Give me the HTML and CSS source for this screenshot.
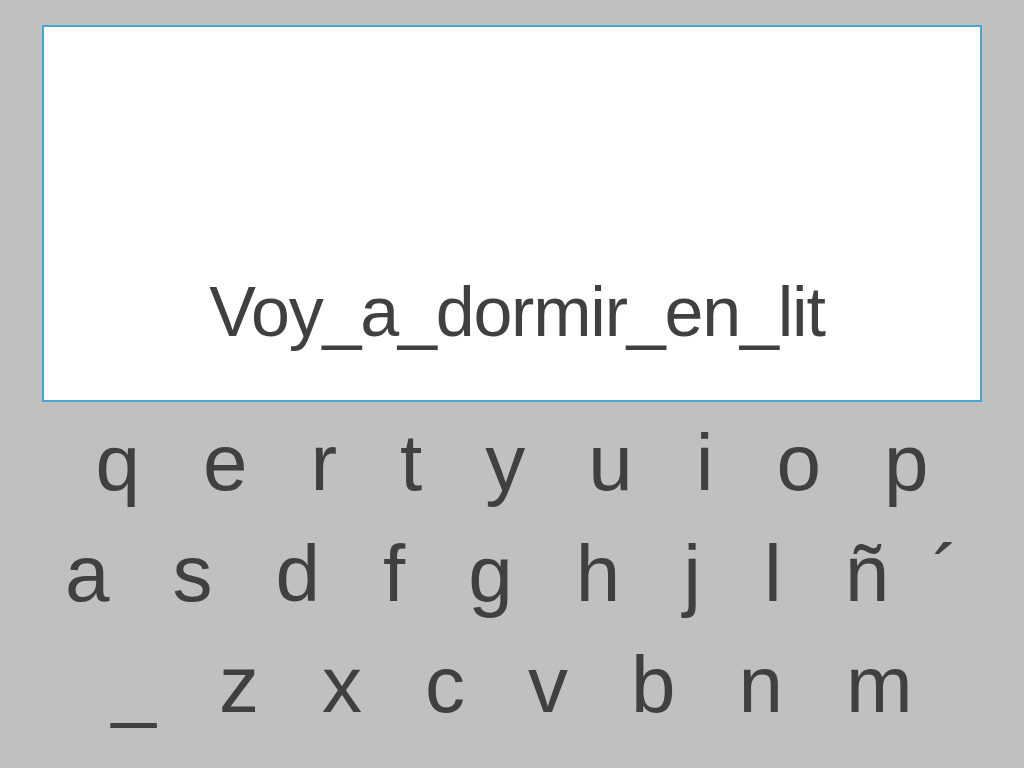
FILE: index.html
```html
<!DOCTYPE html>
<html lang="es">
<head>
   <meta charset="UTF-8">
   <meta name="viewport" content="width=device-width, initial-scale=1.0">
   <title>Teclado</title>
   <link rel="stylesheet" href="styles.css">
</head>
<body>
   <div class="screen">
      <div class="sentence">Voy_a_dormir_en_lit</div>
   </div>
   <div class="keyboard">
      <div class="key-row">
         <span class="key">q</span>
         <span class="key">e</span>
         <span class="key">r</span>
         <span class="key">t</span>
         <span class="key">y</span>
         <span class="key">u</span>
         <span class="key">i</span>
         <span class="key">o</span>
         <span class="key">p</span>
      </div>
      <div class="key-row">
         <span class="key">a</span>
         <span class="key">s</span>
         <span class="key">d</span>
         <span class="key">f</span>
         <span class="key">g</span>
         <span class="key">h</span>
         <span class="key">j</span>
         <span class="key">l</span>
         <span class="key">ñ</span>
         <span class="key key-accent">´</span>
      </div>
      <div class="key-row">
         <span class="key">_</span>
         <span class="key">z</span>
         <span class="key">x</span>
         <span class="key">c</span>
         <span class="key">v</span>
         <span class="key">b</span>
         <span class="key">n</span>
         <span class="key">m</span>
      </div>
   </div>
</body>
</html>
```

FILE: styles.css
```css
body {
   font-family: "Liberation Sans", Arial, sans-serif;
   background-color: #c0c0c0;
   color: #404040;
   margin: 0;
}

.screen {
   box-sizing: border-box;
   width: 940px;
   height: 377px;
   margin: 25px 0 0 42px;
   background: #ffffff;
   border: 2px solid #47a7cf;
   display: flex;
   flex-direction: column;
   justify-content: flex-end;
   padding-bottom: 48px;
}

.sentence {
   font-size: 70px;
   line-height: 80px;
   letter-spacing: -1.2px;
   text-align: center;
   padding-left: 10px;
}

.keyboard {
   margin-top: 5px;
}

.key-row {
   display: flex;
   justify-content: center;
   gap: 63px;
   font-size: 80px;
   line-height: 111px;
}

.key {
   cursor: pointer;
}

/* the accent glyph sits far right in its box */
.key-accent {
   margin-left: -20px;
}
```
